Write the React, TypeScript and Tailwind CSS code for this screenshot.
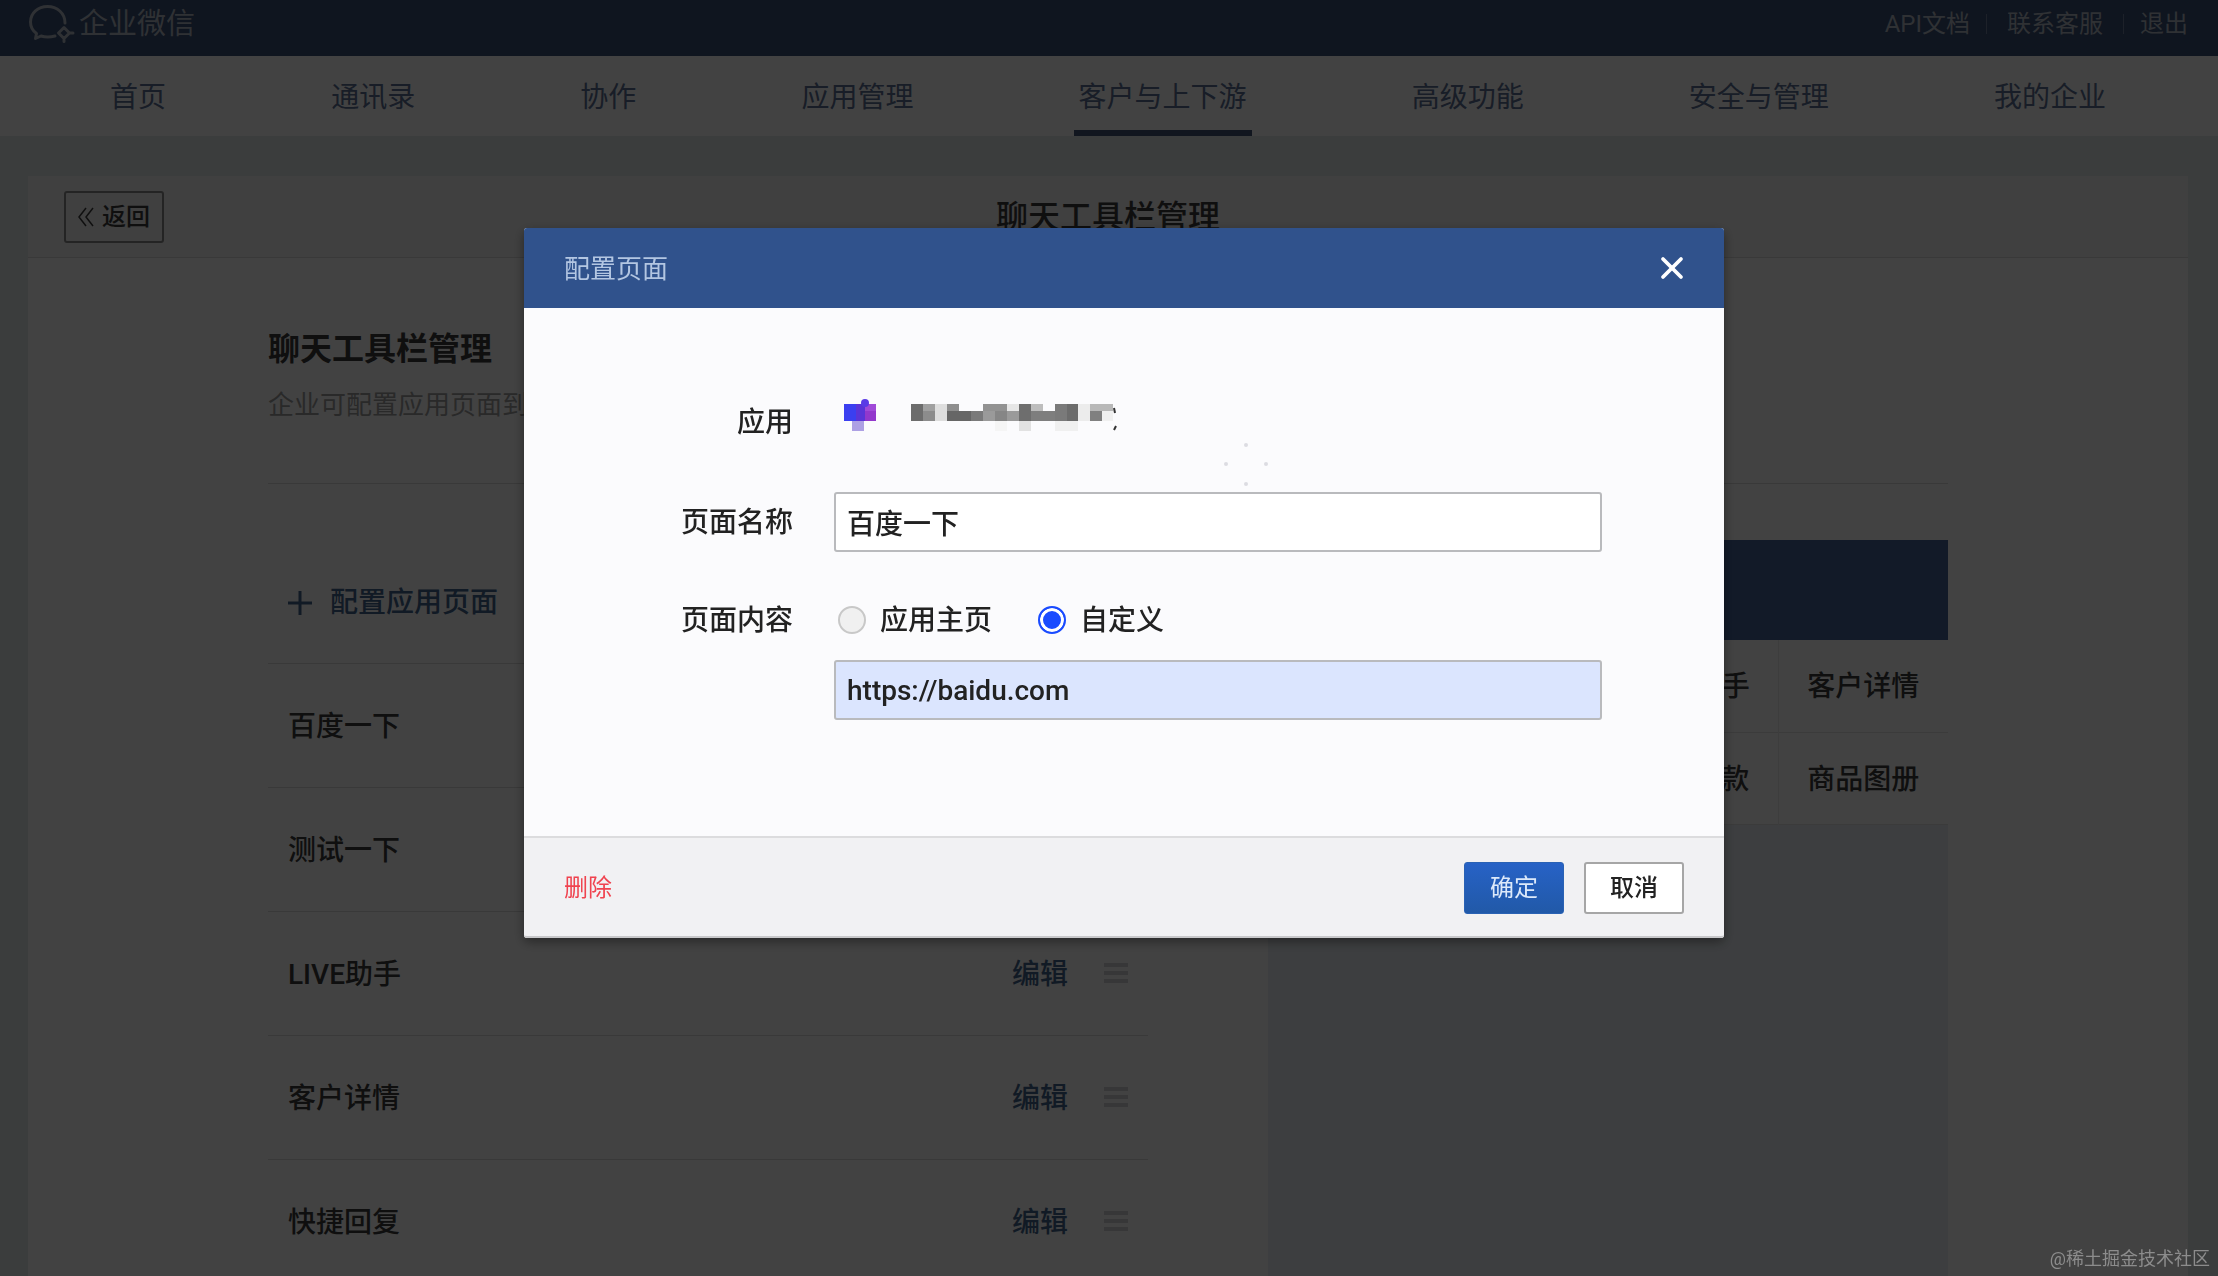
import { useState } from 'react';
import { X } from 'lucide-react';

const navItems = ['首页', '通讯录', '协作', '应用管理', '客户与上下游', '高级功能', '安全与管理', '我的企业'];
const activeNav = '客户与上下游';

const pages = ['百度一下', '测试一下', 'LIVE助手', '客户详情', '快捷回复'];

const previewRows = [
  ['百度一下', '测试一下', 'LIVE助手', '客户详情'],
  ['快捷回复', '红包', '对外收款', '商品图册'],
];

// [x, y, width, height, fill]
const nameBlocks: [number, number, number, number, string][] = [
  [0, 5, 12, 17, '#6c6c6c'],
  [12, 5, 12, 7, '#a0a0a0'],
  [12, 12, 12, 10, '#8c8c8c'],
  [24, 5, 12, 17, '#dedede'],
  [36, 5, 12, 7, '#8e8e8e'],
  [36, 12, 24, 10, '#666666'],
  [60, 12, 12, 10, '#7a7a7a'],
  [72, 5, 24, 7, '#929292'],
  [72, 12, 12, 10, '#9a9a9a'],
  [84, 12, 12, 10, '#868686'],
  [96, 5, 12, 7, '#e6e6e6'],
  [96, 12, 12, 10, '#9a9a9a'],
  [84, 22, 12, 10, '#f5f5f5'],
  [108, 5, 12, 17, '#6e6e6e'],
  [108, 22, 12, 10, '#e2e2e2'],
  [120, 5, 12, 7, '#bdbdbd'],
  [120, 12, 24, 10, '#7e7e7e'],
  [144, 5, 12, 17, '#7a7a7a'],
  [156, 5, 11, 17, '#6c6c6c'],
  [144, 22, 23, 10, '#f0f0f0'],
  [167, 5, 12, 17, '#ececec'],
  [179, 5, 23, 7, '#b8b8b8'],
  [179, 12, 12, 10, '#808080'],
  [191, 12, 11, 10, '#f0f0f0'],
];

function Logo() {
  return (
    <svg className="h-10 w-12" viewBox="0 0 48 40" fill="none" stroke="currentColor" strokeWidth="3" strokeLinecap="round" strokeLinejoin="round">
      <path d="M37 19 C37 9 29 2.500 19.500 2.500 C10 2.500 2.500 9 2.500 18 C2.500 23 5 27 8.500 29.500 L7.500 34.500 L13 32 C18 33.500 23 33 27 32" />
      <path d="M36 23.500 L41.500 29 L36 34.500 L30.500 29 Z M41.500 29 h3.500 M36 34.500 v3" />
    </svg>
  );
}

function DragHandle() {
  return (
    <svg className="h-6 w-6" viewBox="0 0 24 24" stroke="currentColor" strokeWidth="4">
      <path d="M0 2h24M0 10h24M0 18h24" />
    </svg>
  );
}

function TopBar() {
  return (
    <header className="flex h-14 shrink-0 items-center justify-between bg-[#3a5177] pr-[30px] pb-2 pl-7 text-[#b4bcc8]">
      <a href="#home" className="flex items-center gap-[3px]">
        <Logo />
        <span className="text-[29px] leading-10">企业微信</span>
      </a>
      <div className="flex items-center text-2xl">
        <a href="#api">API文档</a>
        <span className="mr-5 ml-4 h-5 w-px bg-[#70819d]" />
        <a href="#service">联系客服</a>
        <span className="mr-4 ml-5 h-5 w-px bg-[#70819d]" />
        <a href="#logout">退出</a>
      </div>
    </header>
  );
}

function NavBar() {
  return (
    <nav className="flex h-20 shrink-0 justify-between bg-white pr-[112px] pl-[110px] text-[28px] text-[#5c7196]">
      {navItems.map((item) => (
        <a
          key={item}
          href={`#${item}`}
          className={
            item === activeNav
              ? '-mx-[5px] flex items-center border-b-[6px] border-[#425778] px-[5px] pt-2.5'
              : 'flex items-center pt-1'
          }
        >
          {item}
        </a>
      ))}
    </nav>
  );
}

function PageList() {
  return (
    <div className="w-[880px]">
      <div className="flex h-[124px] items-center border-b border-[#dadada] px-5 pt-[3px]">
        <button type="button" className="flex items-center gap-[18px] text-[28px] font-medium text-[#44668e]">
          <svg className="h-6 w-6" viewBox="0 0 24 24" stroke="currentColor" strokeWidth="3">
            <path d="M0 12h24M12 0v24" />
          </svg>
          配置应用页面
        </button>
      </div>
      <ul>
        {pages.map((page) => (
          <li key={page} className="flex h-[124px] items-center border-b border-[#dadada] px-5 pt-[3px]">
            <span className="flex-1 text-[28px] font-medium">{page}</span>
            <button type="button" className="mr-9 text-[28px] font-medium text-[#44668e]">
              编辑
            </button>
            <span className="text-[#d4d4d8]">
              <DragHandle />
            </span>
          </li>
        ))}
      </ul>
    </div>
  );
}

function Preview() {
  return (
    <div className="flex w-[680px] flex-col bg-[#ebf0f5]">
      <div className="h-[100px] shrink-0 bg-[#46669c]" />
      <table className="w-full table-fixed bg-white text-center text-[28px] font-medium">
        <tbody>
          {previewRows.map((row) => (
            <tr key={row[0]} className="h-[92px] border-b border-[#e4e4e4]">
              {row.map((cell) => (
                <td key={cell} className="border-l border-[#ececec] pt-[3px]">
                  {cell}
                </td>
              ))}
            </tr>
          ))}
        </tbody>
      </table>
    </div>
  );
}

function AppName() {
  return (
    <svg className="h-8 w-[208px]" viewBox="0 0 208 32">
      {nameBlocks.map(([x, y, w, h, fill]) => (
        <rect key={`${x}-${y}`} x={x} y={y} width={w} height={h} fill={fill} />
      ))}
      <path d="M203 9l1 5M205 27l-2 4" stroke="#333" strokeWidth="2" />
    </svg>
  );
}

function AppIcon() {
  return (
    <svg className="h-8 w-8" viewBox="0 0 32 32">
      <rect x="0" y="5" width="12" height="17" fill="#3b3ff0" />
      <rect x="12" y="5" width="9" height="17" fill="#5a34d8" />
      <rect x="21" y="5" width="11" height="7" fill="#a04ad8" />
      <rect x="21" y="12" width="11" height="10" fill="#9238cc" />
      <rect x="8" y="22" width="12" height="10" fill="#ada0e4" />
      <circle cx="21" cy="4" r="4" fill="#5a3be6" />
    </svg>
  );
}

function ConfigDialog() {
  const [name, setName] = useState('百度一下');
  const [content, setContent] = useState('custom');
  const [url, setUrl] = useState('https://baidu.com');

  const radio =
    'h-7 w-7 appearance-none rounded-full border-2 border-[#c8c8c8] bg-[#f0f0f0] checked:border-[#1a4bff] checked:bg-[#1a4bff] checked:shadow-[inset_0_0_0_3px_#ffffff]';
  const field =
    'h-[60px] w-full rounded-[3px] border-2 border-[#b9babd] px-[11px] text-[28px] font-medium text-[#222] outline-none';

  return (
    <form
      role="dialog"
      aria-labelledby="dialog-title"
      className="w-[1200px] rounded-[3px] bg-[#fbfbfd] text-[#222] shadow-[0_4px_12px_rgba(0,0,0,0.4)]"
      onSubmit={(e) => e.preventDefault()}
    >
      <div className="flex h-20 items-center justify-between rounded-t-[3px] bg-[#30528c] px-10">
        <h2 id="dialog-title" className="pt-0.5 text-[26px] text-[#b3c6e2]">
          配置页面
        </h2>
        <button type="button" aria-label="关闭" className="-mr-1.5 text-white">
          <X className="h-9 w-9" strokeWidth={2.5} />
        </button>
      </div>

      <div className="grid grid-cols-[269px_768px] gap-x-[41px] pt-[84px] pb-[116px] text-[28px] font-medium">
        <span className="flex h-[60px] items-center justify-end pt-0.5">应用</span>
        <div className="relative flex h-[60px] items-start gap-[35px] pt-[7px] pl-2.5">
          <AppIcon />
          <AppName />
          <svg className="absolute top-[50px] left-[390px] h-12 w-12" viewBox="0 0 48 48" fill="#dcdce2">
            <circle cx="22" cy="3" r="2" />
            <circle cx="2" cy="22" r="2" />
            <circle cx="42" cy="22" r="2" />
            <circle cx="22" cy="42" r="2" />
          </svg>
        </div>

        <label htmlFor="page-name" className="mt-10 flex h-[60px] items-center justify-end pt-0.5">
          页面名称
        </label>
        <div className="mt-10">
          <input id="page-name" className={`${field} bg-white`} value={name} onChange={(e) => setName(e.target.value)} />
        </div>

        <span className="mt-10 flex h-14 items-center justify-end pt-0.5">页面内容</span>
        <div className="mt-10">
          <div className="flex h-14 items-center gap-[46px] pl-1">
            <label className="flex items-center gap-3.5">
              <input
                type="radio"
                name="content"
                className={radio}
                checked={content === 'home'}
                onChange={() => setContent('home')}
              />
              <span className="pt-0.5">应用主页</span>
            </label>
            <label className="flex items-center gap-3.5">
              <input
                type="radio"
                name="content"
                className={radio}
                checked={content === 'custom'}
                onChange={() => setContent('custom')}
              />
              <span className="pt-0.5">自定义</span>
            </label>
          </div>
          <input
            aria-label="自定义链接"
            className={`${field} mt-3 bg-[#dbe5fe]`}
            value={url}
            onChange={(e) => setUrl(e.target.value)}
          />
        </div>
      </div>

      <div className="flex h-[102px] items-center rounded-b-[3px] border-y-2 border-t-[#dcdcde] border-b-[#c8c8ca] bg-[#f1f1f3] px-10 pt-0.5 text-2xl">
        <button type="button" className="mr-auto text-[#f0434f]">
          删除
        </button>
        <button
          type="submit"
          className="mr-5 h-[52px] w-[100px] rounded-[3px] border border-[#2a62b4] bg-linear-to-b from-[#2762c6] to-[#2159a8] text-[#dce9fa]"
        >
          确定
        </button>
        <button type="button" className="h-[52px] w-[100px] rounded-[3px] border-2 border-[#a6a6a6] bg-white font-medium">
          取消
        </button>
      </div>
    </form>
  );
}

export default function App() {
  return (
    <div className="flex h-screen flex-col overflow-hidden bg-[#e3ebeb] font-['Roboto','Noto_Sans_CJK_SC',sans-serif] text-[#3c3c3c]">
      <TopBar />
      <NavBar />

      <main className="mt-10 mr-[30px] ml-7 flex flex-1 flex-col bg-white">
        <div className="grid h-[82px] shrink-0 grid-cols-3 items-center border-b border-[#dcdcdc] bg-[#f5f5f5] px-9">
          <button
            type="button"
            className="flex h-[52px] w-[100px] items-center justify-center gap-2 rounded-[3px] border-2 border-[#8c8c8c] text-2xl font-medium"
          >
            <svg className="h-5 w-4" viewBox="0 0 16 20" fill="none" stroke="currentColor" strokeWidth="1.500">
              <path d="M8 1L1 10l7 9M15 1l-7 9 7 9" />
            </svg>
            返回
          </button>
          <h1 className="text-center text-[32px] font-medium">聊天工具栏管理</h1>
        </div>

        <div className="mx-[240px] flex flex-1 flex-col">
          <div className="border-b border-[#dadada] pt-[67px] pb-[58px]">
            <h2 className="text-[32px] leading-[48px] font-bold">聊天工具栏管理</h2>
            <p className="mt-3 text-[26px] leading-10 text-[#a0a0a0]">企业可配置应用页面到聊天工具栏</p>
          </div>
          <div className="mt-14 flex flex-1 justify-between">
            <PageList />
            <Preview />
          </div>
        </div>
      </main>

      <div className="fixed inset-0 flex items-start justify-center bg-black/74 pt-[228px] pl-[30px]">
        <ConfigDialog />
      </div>

      <span className="fixed right-2 bottom-1 text-[18px] text-[#8c8c8c]">@稀土掘金技术社区</span>
    </div>
  );
}
